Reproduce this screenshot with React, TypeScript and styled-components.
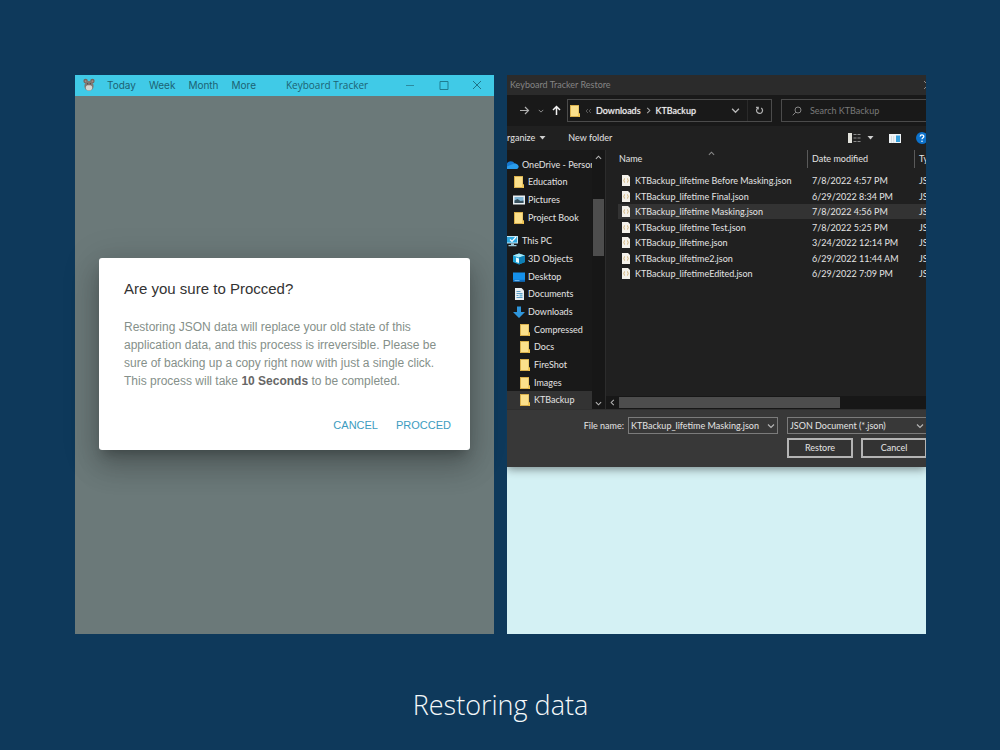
import React from "react";
import styled, { createGlobalStyle } from "styled-components";

const GlobalStyle = createGlobalStyle`
  *, *::before, *::after { box-sizing: border-box; }
  body { margin: 0; background: #0e395b; }
  button, input, select { font: inherit; color: inherit; margin: 0; }
`;

const Page = styled.main`
  min-height: 100vh;
  display: flex;
  flex-direction: column;
  padding: 75px 74px 25px 75px;
  background: #0e395b;
`;

const Panels = styled.div`
  flex: 1;
  display: grid;
  grid-template-columns: minmax(0, 1fr) minmax(0, 1fr);
  gap: 13px;
`;

const Caption = styled.h1`
  margin: 0;
  padding-top: 51px;
  font: 300 27px/40px "Open Sans", sans-serif;
  color: #f4f8fa;
  text-align: center;
`;

/* ---------- Tracker window ---------- */

const TrackerWindow = styled.section`
  display: flex;
  flex-direction: column;
  background: #6b7979;
`;

const TrackerBar = styled.header`
  height: 21px;
  display: flex;
  align-items: center;
  padding: 0 12px 2px 8px;
  background: #40cae7;
  color: #1c6273;
  font: 400 10px/18px Inter, sans-serif;
`;

const Menu = styled.nav`
  display: flex;
  gap: 13px;
  margin-left: 12px;
`;

const MenuLink = styled.a`
  color: inherit;
  text-decoration: none;
`;

const BarTitle = styled.span`
  flex: 1;
  padding-left: 30px;
  font-family: "Open Sans", sans-serif;
`;

const WindowControls = styled.div`
  display: flex;
  gap: 22px;
`;

const IconButton = styled.button`
  display: flex;
  align-items: center;
  justify-content: center;
  padding: 0;
  border: 0;
  background: none;
  svg { display: block; }
`;

const Backdrop = styled.div`
  flex: 1;
  display: flex;
  align-items: center;
  padding: 0 24px 22px;
`;

const Dialog = styled.div`
  flex: 1;
  padding: 21px 19px 15px 25px;
  border-radius: 3px;
  background: #fff;
  box-shadow: 0 8px 11px -5px rgba(0, 0, 0, 0.25), 0 17px 28px 2px rgba(0, 0, 0, 0.16),
    0 6px 34px 6px rgba(0, 0, 0, 0.12);
  font-family: "Liberation Sans", Arial, sans-serif;
`;

const DialogTitle = styled.h2`
  margin: 0;
  font-size: 15px;
  line-height: 20px;
  font-weight: 400;
  color: #333;
`;

const DialogText = styled.p`
  margin: 19px 0 0;
  font-size: 12px;
  line-height: 18px;
  color: #85908a;
  b { color: #666; }
`;

const DialogActions = styled.div`
  display: flex;
  justify-content: flex-end;
  gap: 18px;
  margin-top: 25px;
`;

const TextButton = styled.button`
  padding: 0;
  border: 0;
  background: none;
  color: #3c9cc0;
  font-size: 11px;
  line-height: 20px;
  text-transform: uppercase;
`;

/* ---------- File chooser ---------- */

const Desktop = styled.section`
  background: #d4f1f4;
  overflow: hidden;
`;

const Chooser = styled.div`
  background: #202020;
  color: #e4e4e4;
  font: 400 9px/14px Lato, sans-serif;
  box-shadow: 0 2px 9px rgba(0, 0, 0, 0.45);
`;

const ChooserTitle = styled.header`
  height: 20px;
  display: flex;
  justify-content: space-between;
  align-items: center;
  padding-left: 3px;
  background: #2b2b2b;
  color: #848484;
  overflow: hidden;
`;

const CloseButton = styled(IconButton)`
  margin-right: -7px;
`;

const AddressRow = styled.div`
  height: 31px;
  display: flex;
  align-items: center;
  padding-left: 12px;
  background: #191919;
`;

const NavButtons = styled.div`
  width: 48px;
  display: flex;
  align-items: center;
  justify-content: space-between;
  padding-right: 5px;
`;

const AddressBox = styled.div`
  flex: 1;
  height: 23px;
  display: flex;
  align-items: center;
  gap: 4px;
  padding-left: 1px;
  border: 1px solid #4b4b4b;
  color: #f2f2f2;
`;

const Crumb = styled.a`
  color: inherit;
  text-decoration: none;
  text-shadow: 0 0 1px #aaa;
`;

const AddressTools = styled.div`
  align-self: stretch;
  display: flex;
  align-items: center;
  margin-left: auto;
`;

const AddressTool = styled(IconButton)`
  width: 24px;
  align-self: stretch;
  & + & { border-left: 1px solid #2a2a2a; }
`;

const SearchBox = styled.label`
  width: 145px;
  height: 23px;
  display: flex;
  align-items: center;
  gap: 8px;
  margin-left: 9px;
  padding-left: 10px;
  border: 1px solid #4b4b4b;
  border-right: 0;
`;

const SearchInput = styled.input`
  min-width: 0;
  flex: 1;
  padding: 0;
  border: 0;
  outline: 0;
  background: none;
  &::placeholder { color: #7a7a7a; opacity: 1; }
`;

const Toolbar = styled.div`
  height: 24px;
  display: flex;
  align-items: center;
  gap: 22px;
  margin-left: -7px;
  background: #202020;
`;

const ToolButton = styled.button`
  display: flex;
  align-items: center;
  gap: 4px;
  padding: 0;
  border: 0;
  background: none;
  svg { display: block; }
`;

const ViewTools = styled.div`
  display: flex;
  align-items: center;
  gap: 15px;
  margin-left: auto;
  margin-right: -2px;
`;

const ViewButton = styled(IconButton)`
  gap: 6px;
`;

const Browser = styled.div`
  height: 260px;
  display: flex;
  border-bottom: 1px solid #2f2f2f;
`;

const Sidebar = styled.aside`
  width: 98px;
  display: flex;
  background: #191919;
`;

const Tree = styled.ul`
  flex: 1;
  min-width: 0;
  display: flex;
  flex-direction: column;
  margin: 0;
  padding: 6px 0 0;
  list-style: none;
`;

const TreeItem = styled.li<{ $level: number; $selected?: boolean; $spaced?: boolean }>`
  flex: 1;
  display: flex;
  align-items: center;
  gap: 3px;
  margin-top: ${(p) => (p.$spaced ? 6 : 0)}px;
  padding-left: ${(p) => p.$level * 6}px;
  background: ${(p) => (p.$selected ? "#333" : "transparent")};
  white-space: nowrap;
  overflow: hidden;
  svg { flex: none; }
`;

const ScrollColumn = styled.div`
  width: 13px;
  display: flex;
  flex-direction: column;
  align-items: center;
  justify-content: space-between;
  padding: 4px 0 2px;
  background: #171717;
`;

const ScrollThumb = styled.div`
  width: 11px;
  height: 57px;
  margin-bottom: 106px;
  background: #4d4d4d;
`;

const Files = styled.div`
  flex: 1;
  min-width: 0;
  display: flex;
  flex-direction: column;
  justify-content: space-between;
  border-left: 1px solid #2c2c2c;
`;

const FileTable = styled.table`
  width: calc(100% - 12px);
  margin-left: 12px;
  table-layout: fixed;
  border-collapse: collapse;
`;

const NameCol = styled.col``;
const DateCol = styled.col`width: 107px;`;
const TypeCol = styled.col`width: 12px;`;

const HeadCell = styled.th<{ $ruled?: boolean }>`
  height: 23px;
  padding: 0 0 5px;
  text-align: left;
  font-weight: 400;
  white-space: nowrap;
  overflow: hidden;
  span {
    display: block;
    height: 18px;
    line-height: 18px;
    padding-left: ${(p) => (p.$ruled ? 4 : 1)}px;
    border-left: ${(p) => (p.$ruled ? "1px solid #5a5a5a" : "0")};
  }
`;

const SortHead = styled.div`
  display: flex;
  align-items: flex-start;
  svg { margin-left: 66px; }
`;

const FileRow = styled.tr<{ $selected: boolean; $tall: boolean }>`
  height: ${(p) => (p.$tall ? 16 : 15)}px;
  background: ${(p) => (p.$selected ? "#333" : "transparent")};
`;

const Cell = styled.td`
  padding: 0 0 0 5px;
  line-height: 15px;
  white-space: nowrap;
  overflow: hidden;
`;

const FileName = styled.div`
  display: flex;
  align-items: center;
  gap: 5px;
  margin-left: -1px;
  svg { flex: none; }
`;

const HScroll = styled.div`
  height: 13px;
  display: flex;
  align-items: center;
  padding-left: 3px;
  background: #171717;
`;

const HThumb = styled.div`
  flex: 1;
  height: 11px;
  margin: 0 86px 0 3px;
  background: #4d4d4d;
`;

const ChooserFooter = styled.form`
  height: 57px;
  display: grid;
  grid-template-columns: minmax(0, 1fr) 150px 148px;
  grid-template-rows: 17px 20px;
  gap: 4px 0;
  padding-top: 7px;
  background: #383838;
`;

const FieldLabel = styled.label`
  padding-right: 4px;
  line-height: 17px;
  text-align: right;
`;

const Field = styled.div`
  position: relative;
  display: flex;
  border: 1px solid #7b7b7b;
  svg { position: absolute; right: 2px; top: 4px; pointer-events: none; }
`;

const TypeField = styled(Field)`
  margin-left: 9px;
  border-right: 0;
`;

const NameInput = styled.input`
  width: 100%;
  padding: 0 0 0 2px;
  border: 0;
  outline: 0;
  background: none;
`;

const TypeSelect = styled.select`
  width: 100%;
  padding: 0 0 0 2px;
  border: 0;
  outline: 0;
  appearance: none;
  background: #383838;
`;

const FooterButtons = styled.div`
  grid-column: 3;
  display: flex;
  gap: 8px;
  margin-left: 9px;
`;

const FooterButton = styled.button`
  flex: none;
  width: 66px;
  padding: 0;
  border: 2px solid #b4b4b4;
  background: #333;
`;

/* ---------- Icons ---------- */

const Chevron = ({ dir = "down", color = "#b5b5b5", size = 8 }: { dir?: "down" | "up" | "left" | "right"; color?: string; size?: number }) => {
  const turn = { down: 0, left: 90, up: 180, right: 270 }[dir];
  return (
    <svg width={size} height={size} viewBox="0 0 8 8" fill="none" stroke={color} strokeWidth="1.2">
      <path d="M1 2.5 4 5.5 7 2.5" transform={`rotate(${turn} 4 4)`} />
    </svg>
  );
};

const Caret = () => (
  <svg width="7" height="4" viewBox="0 0 7 4" fill="#cfcfcf">
    <path d="M.5 0h6L3.500 3.500z" />
  </svg>
);

const MouseLogo = () => (
  <svg width="12" height="14" viewBox="0 0 12 14">
    <circle cx="2.600" cy="3" r="2.200" fill="#75665f" />
    <circle cx="9.400" cy="3" r="2.200" fill="#75665f" />
    <circle cx="2.600" cy="3.200" r="1" fill="#a58a84" />
    <circle cx="9.400" cy="3.200" r="1" fill="#a58a84" />
    <ellipse cx="6" cy="8" rx="4.600" ry="5" fill="#7f7772" />
    <ellipse cx="6" cy="9.800" rx="3.200" ry="2.800" fill="#d4d6d2" />
    <path d="M4.200 5.800h.9M6.900 5.800h.9" stroke="#333" strokeWidth="1" />
    <path d="M5.400 7.300h1.200L6 8z" fill="#a66" />
  </svg>
);

const Folder = () => (
  <svg width="12" height="14" viewBox="0 0 12 14">
    <path d="M1 1h9v8.500h1V13H1z" fill="#d9b04c" />
    <path d="M2 2h7.500v10H2z" fill="#fbe08b" />
    <path d="M9.500 9.500H11V13H9.500z" fill="#f3c650" />
  </svg>
);

const Cloud = () => (
  <svg width="12" height="14" viewBox="0 0 12 14">
    <path d="M0 5.500C2 2.500 6 2.500 7.500 5.500c2 0 4 1.500 4 3.300 0 1.200-1 2.200-2.200 2.200H0z" fill="#1678d0" />
    <path d="M0 8.500 7.500 5.500c2 0 4 1.500 4 3.300 0 1.200-1 2.200-2.200 2.200H0z" fill="#2a9bea" />
  </svg>
);

const Picture = () => (
  <svg width="12" height="14" viewBox="0 0 12 14">
    <path d="M0 2.500h12v9H0z" fill="#e9eef1" />
    <path d="M1.500 4h9v6h-9z" fill="#7fb6d6" />
    <path d="M1.500 10V7.500l3-1.500 3 2 3-.5V10z" fill="#38505c" />
  </svg>
);

const Computer = () => (
  <svg width="12" height="14" viewBox="0 0 12 14">
    <path d="M0 2h11v7.500H0z" fill="#bfe6f8" />
    <path d="M0 3h10v5.500H0z" fill="#2fa8e0" />
    <path d="M3 5.500 5 7.500 9 3" fill="none" stroke="#fff" strokeWidth="1.200" />
    <path d="M4 9.500h3V11h2.500v1.200H1.500V11H4z" fill="#9fc9da" />
  </svg>
);

const Cube = () => (
  <svg width="12" height="14" viewBox="0 0 12 14">
    <path d="M6 1.500 12 3.500v6.500l-6 2.500L0 10V3.500z" fill="#1ea3d8" />
    <path d="M6 1.500 12 3.500 6 5.500 0 3.500z" fill="#a9e9f7" />
    <path d="M6 5.500 12 3.500V10l-6 2.500z" fill="#0f7fb5" />
    <path d="M3 5.500 6 6.500V11L3 10z" fill="#e6fbff" />
  </svg>
);

const DesktopIcon = () => (
  <svg width="12" height="14" viewBox="0 0 12 14">
    <path d="M0 2.500h12v9H0z" fill="#1590ea" />
    <path d="M0 9.800h12v1.700H0z" fill="#0c6cc0" />
    <path d="M1.500 10.600h5" stroke="#8fd0ff" strokeWidth=".8" />
  </svg>
);

const DocumentIcon = () => (
  <svg width="12" height="14" viewBox="0 0 12 14">
    <path d="M2 1h6.500L11 3.500V13H2z" fill="#e8eef2" />
    <path d="M3.500 4.500h4M3.500 6.500h6M3.500 8.500h2M3.500 10.500h6" stroke="#5b9cc4" strokeWidth="1" />
    <path d="M6.500 7.500h3v2h-3z" fill="#6fb7d8" />
  </svg>
);

const DownloadIcon = () => (
  <svg width="12" height="14" viewBox="0 0 12 14">
    <path d="M4 1.500h4V7h4l-6 6-6-6h4z" fill="#2f96dc" />
  </svg>
);

const JsonFile = () => (
  <svg width="8" height="11" viewBox="0 0 8 11">
    <path d="M0 0h6l2 2v9H0z" fill="#f4f1ea" />
    <path d="M3 3.500c-1 0-.6 1.500-1.200 2C2.400 6 2 7.500 3 7.500M5 3.500c1 0 .6 1.500 1.200 2C5.600 6 6 7.500 5 7.500" fill="none" stroke="#c9a35c" strokeWidth=".8" />
  </svg>
);

const Arrow = ({ up }: { up?: boolean }) => (
  <svg width="11" height="11" viewBox="0 0 11 11" fill="none" stroke={up ? "#f4f4f4" : "#b0b0b0"} strokeWidth={up ? 1.5 : 1.2}>
    <path d="M1 5.500h8.500M6 2l3.500 3.500L6 9" transform={up ? "rotate(-90 5.500 5.500)" : undefined} />
  </svg>
);

const Refresh = () => (
  <svg width="9" height="9" viewBox="0 0 9 9" fill="none" stroke="#b0b0b0" strokeWidth="1.200">
    <path d="M6.200 1.900A3 3 0 1 1 2.600 2.100M1 1.300h2.200v2.200" />
  </svg>
);

const SearchIcon = () => (
  <svg width="10" height="10" viewBox="0 0 10 10" fill="none" stroke="#858585" strokeWidth="1">
    <circle cx="6" cy="4" r="3" />
    <path d="M3.800 6.200.7 9.300" />
  </svg>
);

const ListView = () => (
  <svg width="13" height="10" viewBox="0 0 13 10">
    <path d="M0 0h4v10H0z" fill="#e2e2dc" />
    <path d="M5.500 1.500h3M9.500 1.500h3M5.500 5h3M9.500 5h3M5.500 8.500h3M9.500 8.500h3" stroke="#8a8a8a" strokeWidth="1" />
  </svg>
);

const PreviewPane = () => (
  <svg width="12" height="9" viewBox="0 0 12 9">
    <path d="M0 0h12v9H0z" fill="#f0f4f6" />
    <path d="M7 1.500h4V8H7z" fill="#38a0dc" />
    <path d="M2.500 2v7M4.700 2v7" stroke="#c6d0d6" strokeWidth=".6" />
  </svg>
);

const Help = () => (
  <svg width="12" height="12" viewBox="0 0 12 12">
    <circle cx="6" cy="6" r="6" fill="#0c72cc" />
    <path d="M4.200 4.600C4.200 2.400 7.800 2.400 7.800 4.500c0 1.300-1.800 1.300-1.800 2.800" fill="none" stroke="#fff" strokeWidth="1.300" />
    <circle cx="6" cy="9.200" r=".8" fill="#fff" />
  </svg>
);

const Cross = ({ color }: { color: string }) => (
  <svg width="10" height="10" viewBox="0 0 10 10" fill="none" stroke={color} strokeWidth="1">
    <path d="M1 1l8 8M9 1 1 9" />
  </svg>
);

/* ---------- Data ---------- */

const tree = [
  { label: "OneDrive - Personal", level: 0, icon: <Cloud /> },
  { label: "Education", level: 1, icon: <Folder /> },
  { label: "Pictures", level: 1, icon: <Picture /> },
  { label: "Project Book", level: 1, icon: <Folder /> },
  { label: "This PC", level: 0, icon: <Computer />, spaced: true },
  { label: "3D Objects", level: 1, icon: <Cube /> },
  { label: "Desktop", level: 1, icon: <DesktopIcon /> },
  { label: "Documents", level: 1, icon: <DocumentIcon /> },
  { label: "Downloads", level: 1, icon: <DownloadIcon /> },
  { label: "Compressed", level: 2, icon: <Folder /> },
  { label: "Docs", level: 2, icon: <Folder /> },
  { label: "FireShot", level: 2, icon: <Folder /> },
  { label: "Images", level: 2, icon: <Folder /> },
  { label: "KTBackup", level: 2, icon: <Folder />, selected: true },
];

const files = [
  ["KTBackup_lifetime Before Masking.json", "7/8/2022 4:57 PM"],
  ["KTBackup_lifetime Final.json", "6/29/2022 8:34 PM"],
  ["KTBackup_lifetime Masking.json", "7/8/2022 4:56 PM"],
  ["KTBackup_lifetime Test.json", "7/8/2022 5:25 PM"],
  ["KTBackup_lifetime.json", "3/24/2022 12:14 PM"],
  ["KTBackup_lifetime2.json", "6/29/2022 11:44 AM"],
  ["KTBackup_lifetimeEdited.json", "6/29/2022 7:09 PM"],
];

const Tracker = () => (
  <TrackerWindow>
    <TrackerBar>
      <MouseLogo />
      <Menu>
        {["Today", "Week", "Month", "More"].map((m) => (
          <MenuLink href="#" key={m}>{m}</MenuLink>
        ))}
      </Menu>
      <BarTitle>Keyboard Tracker</BarTitle>
      <WindowControls>
        <IconButton aria-label="Minimize">
          <svg width="12" height="10" viewBox="0 0 12 10" stroke="#2c8ba0"><path d="M2 5.500h8" /></svg>
        </IconButton>
        <IconButton aria-label="Maximize">
          <svg width="12" height="10" viewBox="0 0 12 10" stroke="#1f7c90" fill="none"><path d="M2 1.500h8v8H2z" /></svg>
        </IconButton>
        <IconButton aria-label="Close"><Cross color="#1f7387" /></IconButton>
      </WindowControls>
    </TrackerBar>
    <Backdrop>
      <Dialog role="dialog" aria-labelledby="confirm-title">
        <DialogTitle id="confirm-title">Are you sure to Procced?</DialogTitle>
        <DialogText>
          Restoring JSON data will replace your old state of this<br />
          application data, and this process is irreversible. Please be<br />
          sure of backing up a copy right now with just a single click.<br />
          This process will take <b>10 Seconds</b> to be completed.
        </DialogText>
        <DialogActions>
          <TextButton>Cancel</TextButton>
          <TextButton>Procced</TextButton>
        </DialogActions>
      </Dialog>
    </Backdrop>
  </TrackerWindow>
);

const FileChooser = () => (
  <Chooser>
    <ChooserTitle>
      <span>Keyboard Tracker Restore</span>
      <CloseButton aria-label="Close"><Cross color="#8a8a8a" /></CloseButton>
    </ChooserTitle>
    <AddressRow>
      <NavButtons>
        <IconButton aria-label="Forward"><Arrow /></IconButton>
        <IconButton aria-label="Recent locations"><Chevron size={6} color="#9a9a9a" /></IconButton>
        <IconButton aria-label="Up"><Arrow up /></IconButton>
      </NavButtons>
      <AddressBox>
        <Folder />
        <svg width="7" height="6" viewBox="0 0 7 6" fill="none" stroke="#555"><path d="M3 1 1 3l2 2M6 1 4 3l2 2" /></svg>
        <Crumb href="#">Downloads</Crumb>
        <Chevron dir="right" size={7} color="#a8a8a8" />
        <Crumb href="#">KTBackup</Crumb>
        <AddressTools>
          <AddressTool aria-label="Previous locations"><Chevron size={9} /></AddressTool>
          <AddressTool aria-label="Refresh"><Refresh /></AddressTool>
        </AddressTools>
      </AddressBox>
      <SearchBox>
        <SearchIcon />
        <SearchInput aria-label="Search" placeholder="Search KTBackup" />
      </SearchBox>
    </AddressRow>
    <Toolbar>
      <ToolButton>Organize <Caret /></ToolButton>
      <ToolButton>New folder</ToolButton>
      <ViewTools>
        <ViewButton aria-label="Change view"><ListView /><Caret /></ViewButton>
        <IconButton aria-label="Preview pane"><PreviewPane /></IconButton>
        <IconButton aria-label="Help"><Help /></IconButton>
      </ViewTools>
    </Toolbar>
    <Browser>
      <Sidebar>
        <Tree>
          {tree.map((t) => (
            <TreeItem key={t.label} $level={t.level} $selected={t.selected} $spaced={t.spaced}>
              {t.icon}
              {t.label}
            </TreeItem>
          ))}
        </Tree>
        <ScrollColumn>
          <Chevron dir="up" size={7} />
          <ScrollThumb />
          <Chevron size={7} />
        </ScrollColumn>
      </Sidebar>
      <Files>
        <FileTable>
          <colgroup><NameCol /><DateCol /><TypeCol /></colgroup>
          <thead>
            <tr>
              <HeadCell><SortHead><span>Name</span><Chevron dir="up" size={7} color="#8a8a8a" /></SortHead></HeadCell>
              <HeadCell $ruled><span>Date modified</span></HeadCell>
              <HeadCell $ruled><span>Type</span></HeadCell>
            </tr>
          </thead>
          <tbody>
            {files.map(([name, date], i) => (
              <FileRow key={name} $selected={i === 2} $tall={i % 2 === 1}>
                <Cell><FileName><JsonFile />{name}</FileName></Cell>
                <Cell>{date}</Cell>
                <Cell>JSON File</Cell>
              </FileRow>
            ))}
          </tbody>
        </FileTable>
        <HScroll>
          <Chevron dir="left" size={7} />
          <HThumb />
        </HScroll>
      </Files>
    </Browser>
    <ChooserFooter>
      <FieldLabel htmlFor="file-name">File name:</FieldLabel>
      <Field>
        <NameInput id="file-name" defaultValue="KTBackup_lifetime Masking.json" />
        <Chevron size={8} />
      </Field>
      <TypeField>
        <TypeSelect aria-label="File type"><option>JSON Document (*.json)</option></TypeSelect>
        <Chevron size={8} />
      </TypeField>
      <FooterButtons>
        <FooterButton type="button">Restore</FooterButton>
        <FooterButton type="button">Cancel</FooterButton>
      </FooterButtons>
    </ChooserFooter>
  </Chooser>
);

export default function App() {
  return (
    <>
      <GlobalStyle />
      <Page>
        <Panels>
          <Tracker />
          <Desktop>
            <FileChooser />
          </Desktop>
        </Panels>
        <Caption>Restoring data</Caption>
      </Page>
    </>
  );
}
